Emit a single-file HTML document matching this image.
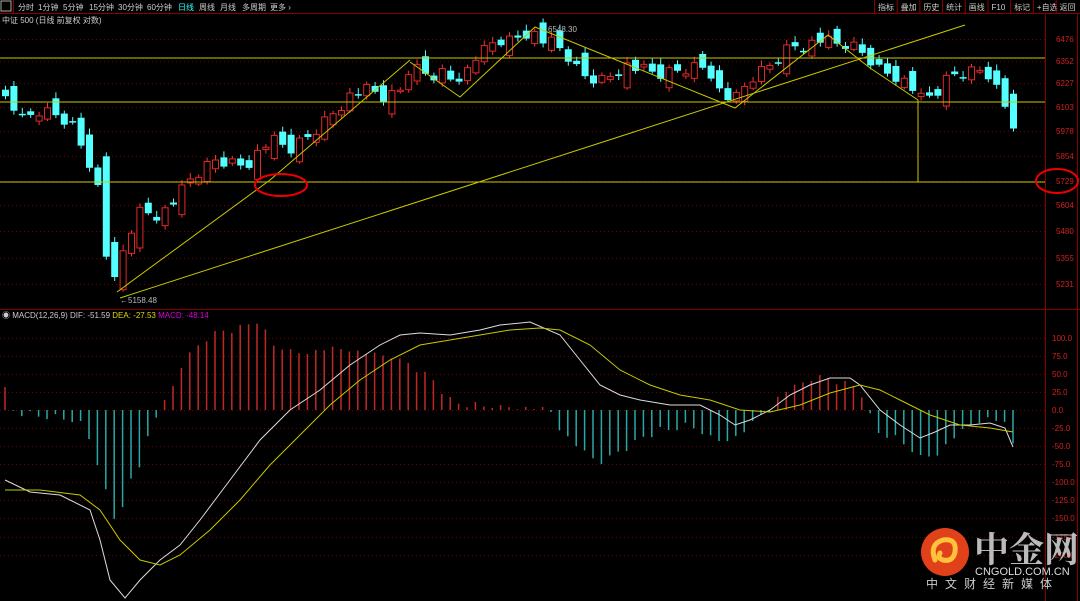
<!DOCTYPE html>
<html><head><meta charset="utf-8"><style>
html,body{margin:0;padding:0;background:#000;width:1080px;height:601px;overflow:hidden;font-family:"Liberation Sans","Noto Sans CJK SC",sans-serif}
svg{display:block}
</style></head><body>
<svg id="s" width="1080" height="601" xmlns="http://www.w3.org/2000/svg" font-family="Liberation Sans, Noto Sans CJK SC, sans-serif">
<rect width="1080" height="601" fill="#000"/>
<g id="grid"></g>
<line x1="0" y1="13.5" x2="1080" y2="13.5" stroke="#8a0000"/>
<rect x="1" y="1" width="10" height="10" fill="none" stroke="#aaa"/>
<line x1="13.5" y1="0" x2="13.5" y2="13" stroke="#8a0000"/>
<g font-size="8" fill="#ccc">
<text x="18" y="10">分时</text><text x="38" y="10">1分钟</text><text x="63" y="10">5分钟</text><text x="89" y="10">15分钟</text><text x="118" y="10">30分钟</text><text x="147" y="10">60分钟</text><text x="178" y="10" fill="#3ff">日线</text><text x="199" y="10">周线</text><text x="220" y="10">月线</text><text x="242" y="10">多周期</text><text x="270" y="10">更多 ›</text>
<text x="2" y="23">中证 500 (日线 前复权 对数)</text>
</g>
<g font-size="8" fill="#ccc" id="rb"></g>
<line x1="1045.5" y1="14" x2="1045.5" y2="601" stroke="#8a0000"/>
<line x1="1077.5" y1="14" x2="1077.5" y2="601" stroke="#8a0000"/>
<line x1="0" y1="309.5" x2="1080" y2="309.5" stroke="#8a0000"/>
<g id="c"></g>
<g stroke="#c8c800" stroke-width="1" fill="none">
<line x1="0" y1="58" x2="1045" y2="58"/><line x1="0" y1="102" x2="1045" y2="102"/><line x1="0" y1="182" x2="1045" y2="182"/>
<polyline points="117,292 270,180 410,60"/>
<line x1="120" y1="298" x2="965" y2="25"/>
<polyline points="410,62 460,97 535,27 735,108 828,35 870,68 918,100 918,182"/>
</g>
<ellipse cx="281" cy="185" rx="26" ry="11" fill="none" stroke="#e00" stroke-width="2"/>
<ellipse cx="1057" cy="181" rx="21" ry="12" fill="none" stroke="#e00" stroke-width="2"/>
<text x="540" y="32" font-size="8" fill="#bbb">←6548.30</text>
<text x="120" y="303" font-size="8" fill="#bbb">←5158.48</text>
<g font-size="8" id="ax" fill="#d02020"></g>
<text x="2" y="318" font-size="8" fill="#ccc">◉ MACD(12,26,9) DIF: -51.59 <tspan fill="#dd0">DEA: -27.53</tspan> <tspan fill="#d0d">MACD: -48.14</tspan></text>
<g id="m"></g>
<circle cx="945" cy="552" r="24" fill="#e0401a"/>
<path d="M935 560 q-6 -16 8 -20 q14 -2 12 12 q-2 10 -12 8 q-6 -2 -3 -7" fill="none" stroke="#ffc23a" stroke-width="5" stroke-linecap="round"/>
<text x="974" y="562" font-size="35" font-weight="bold" fill="#bbb" font-family="Noto Serif CJK SC, serif">中金网</text>
<text x="975" y="575" font-size="11" fill="#ddd">CNGOLD.COM.CN</text>
<text x="926" y="588" font-size="12" fill="#ccc" letter-spacing="7">中文财经新媒体</text>
</svg>
<script>
(function(){
var NS="http://www.w3.org/2000/svg";
function el(p,t,a,txt){var e=document.createElementNS(NS,t);for(var k in a)e.setAttribute(k,a[k]);if(txt!==undefined)e.textContent=txt;document.getElementById(p).appendChild(e);return e;}
var rb=["指标","叠加","历史","统计","画线","F10","标记","+自选","返回"];
rb.forEach(function(t,j){var x=878+j*22.7;el("rb","line",{x1:x-3.5,y1:0,x2:x-3.5,y2:13,stroke:"#8a0000"});el("rb","text",{x:x,y:10},t);});
var L=[[6476,39],[6352,61],[6227,83],[6103,107],[5978,131],[5854,156],[5729,181],[5604,205],[5480,231],[5355,258],[5231,284]];
L.forEach(function(v){el("grid","line",{x1:0,y1:v[1]+.5,x2:1045,y2:v[1]+.5,stroke:"#6a0000","stroke-dasharray":"1,3"});el("ax","text",{x:1056,y:v[1]+3},v[0]);});
var M=[[100,338],[75,356],[50,374],[25,392],[0,410],[-25,428],[-50,446],[-75,464],[-100,482],[-125,500],[-150,518],[-175,537],[-200,555]];
M.forEach(function(v){el("grid","line",{x1:0,y1:v[1]+.5,x2:1045,y2:v[1]+.5,stroke:"#6a0000","stroke-dasharray":"1,3"});el("ax","text",{x:1052,y:v[1]+3},v[0].toFixed(1));});
function interp(P,x){for(var k=1;k<P.length;k++){if(x<=P[k][0]){var a=P[k-1],b=P[k];return a[1]+(b[1]-a[1])*(x-a[0])/(b[0]-a[0]);}}return P[P.length-1][1];}
var C=[[0,95],[10,100],[20,120],[40,110],[60,115],[78,130],[86,170],[100,190],[105,250],[115,285],[125,240],[140,210],[160,215],[175,200],[190,180],[215,160],[245,165],[270,140],[290,150],[310,135],[330,115],[350,95],[370,90],[385,100],[400,90],[410,65],[430,75],[445,70],[460,90],[470,60],[485,50],[495,40],[510,40],[530,30],[540,40],[555,45],[570,60],[580,75],[600,80],[610,75],[625,65],[640,70],[660,75],[680,70],[700,65],[715,75],[720,95],[735,100],[750,80],[770,65],[790,45],[805,45],[820,40],[835,45],[850,45],[865,55],[880,70],[895,75],[910,85],[920,100],[935,95],[950,75],[965,72],[985,68],[995,85],[1005,105],[1013,135]];
var prev=90,n=0;
for(var x=5;x<=1014;x+=8.4){n++;var c=interp(C,x)+((n*37)%11-5)*1.3;var o=prev-(c-prev)*0.4+((n*53)%7-3)*2.2;var t0=Math.min(o,c),b0=Math.max(o,c);if(b0-t0<1.5)b0=t0+1.5;
var up=c<o;var col=up?"#ff3030":"#54ffff";
el("c","line",{x1:x+.5,y1:t0-3-(n%4),x2:x+.5,y2:b0+2+(n%3),stroke:col});
el("c","rect",up?{x:x-2.5,y:t0,width:6,height:b0-t0,fill:"#000",stroke:"#e02828"}:{x:x-3,y:t0,width:7,height:b0-t0,fill:col});prev=c;}
var H=[[5,390],[8,410],[12,412],[80,420],[86,430],[90,440],[100,470],[115,520],[125,505],[130,480],[140,465],[150,430],[160,410],[170,395],[180,370],[190,355],[200,345],[210,335],[220,333],[240,328],[250,322],[260,320],[270,343],[300,352],[330,348],[350,350],[370,355],[390,358],[410,365],[430,378],[450,400],[470,405],[500,405],[540,408],[550,410],[560,430],[580,450],[600,465],[615,455],[640,440],[660,430],[690,425],[720,440],[740,435],[760,415],[770,410],[780,395],[800,385],[820,378],[840,382],[860,390],[868,410],[875,430],[900,440],[920,455],[935,455],[950,440],[970,425],[990,418],[1005,425],[1013,445]];
for(var x=5;x<=1014;x+=8.4){var y=interp(H,x);y+=((Math.round(x)*7)%5-2)*1.5;var u=y<410;el("m","line",{x1:x,y1:410,x2:x,y2:y,stroke:u?"#c02828":"#2aa8a8","stroke-width":1.5});}
function pl(P,col){var s=P.map(function(p){return p.join(",")}).join(" ");el("m","polyline",{points:s,fill:"none",stroke:col,"stroke-width":1});}
pl([[5,480],[30,492],[60,495],[90,510],[100,540],[110,580],[125,598],[140,580],[160,560],[180,545],[200,520],[230,480],[260,440],[290,410],[320,390],[350,365],[380,345],[400,335],[420,333],[450,335],[480,330],[500,325],[530,322],[560,335],[580,360],[600,385],[620,395],[640,400],[670,405],[700,405],[720,415],[735,425],[750,420],[770,410],[790,395],[810,385],[830,378],[850,378],[860,385],[880,410],[900,425],[920,438],[935,432],[950,425],[970,425],[990,423],[1005,428],[1013,447]],"#ddd");
pl([[5,490],[40,490],[80,495],[100,510],[120,540],[140,560],[160,565],[180,555],[210,530],[240,500],[270,465],[300,435],[330,405],[360,380],[390,360],[420,345],[450,340],[480,335],[510,330],[540,328],[560,330],[590,345],[620,370],[650,385],[680,395],[710,400],[740,410],[770,412],[800,405],[830,393],[860,385],[880,390],[900,400],[930,415],[960,425],[990,428],[1013,432]],"#c8c800");
})();
</script>
</body></html>
